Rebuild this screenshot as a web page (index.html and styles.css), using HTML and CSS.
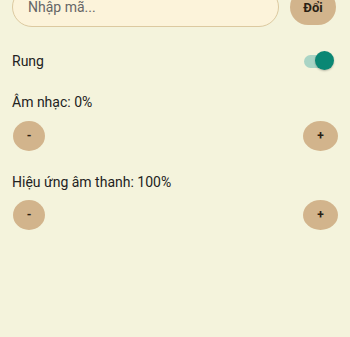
FILE: index.html
```html
<!DOCTYPE html>
<html lang="vi">
<head>
<meta charset="utf-8">
<link rel="stylesheet" href="styles.css">
</head>
<body>
<div class="page">
  <div class="code-row">
    <div class="code-input">Nhập mã...</div>
    <button class="redeem">Đổi</button>
  </div>
  <div class="setting-row">
    <span class="label">Rung</span>
    <span class="toggle"><span class="track"></span><span class="thumb"></span></span>
  </div>
  <div class="label vol-label">Âm nhạc: 0%</div>
  <div class="step-row">
    <button class="step step-minus">-</button>
    <button class="step step-plus">+</button>
  </div>
  <div class="label vol-label">Hiệu ứng âm thanh: 100%</div>
  <div class="step-row">
    <button class="step step-minus">-</button>
    <button class="step step-plus">+</button>
  </div>
</div>
</body>
</html>
```
FILE: styles.css
```css
html, body {
  margin: 0;
  background: #f4f3dc;
  font-family: Roboto, "Noto Sans", sans-serif;
  font-size: 14px;
  color: #222;
}
.page {
  margin-top: -13px;
  padding: 0 12px 0 12px;
}
.code-row {
  display: flex;
  align-items: center;
  gap: 11px;
  height: 40px;
}
.code-input {
  flex: 1;
  box-sizing: border-box;
  height: 40px;
  border: 1px solid #dcc9a0;
  border-radius: 20px;
  background: #fcf3da;
  padding-left: 15px;
  display: flex;
  align-items: center;
  color: #666;
  font-size: 14px;
}
.redeem {
  width: 46px;
  height: 36px;
  border: none;
  border-radius: 18px;
  background: #d2b48c;
  font-family: Roboto, sans-serif;
  font-weight: bold;
  font-size: 13px;
  color: #2a1f14;
  padding: 0;
  margin-right: 2px;
}
.setting-row {
  margin-top: 24px;
  height: 20px;
  display: flex;
  align-items: center;
  justify-content: space-between;
  padding-right: 4px;
}
.label {
  line-height: 20px;
  font-size: 14px;
}
.toggle {
  position: relative;
  width: 30px;
  height: 20px;
  display: flex;
  align-items: center;
}
.track {
  width: 28px;
  height: 13px;
  border-radius: 7px;
  background: #a9d4c5;
}
.thumb {
  position: absolute;
  right: 0;
  top: 0;
  width: 19px;
  height: 19px;
  border-radius: 50%;
  background: #0a8774;
  box-shadow: 0 1px 2px rgba(0,0,0,0.25);
}
.vol-label {
  margin-top: 21px;
}
.step-row {
  margin-top: 9px;
  display: flex;
  justify-content: space-between;
}
.step-row:last-child {
  margin-top: 8px;
}
.step {
  height: 30px;
  border: none;
  border-radius: 50%;
  background: #d2b48c;
  font-family: Roboto, sans-serif;
  font-weight: bold;
  font-size: 12px;
  color: #2a1f14;
  padding: 0;
}
.step-minus {
  width: 32px;
  margin-left: 1px;
}
.step-plus {
  width: 35px;
}
```
